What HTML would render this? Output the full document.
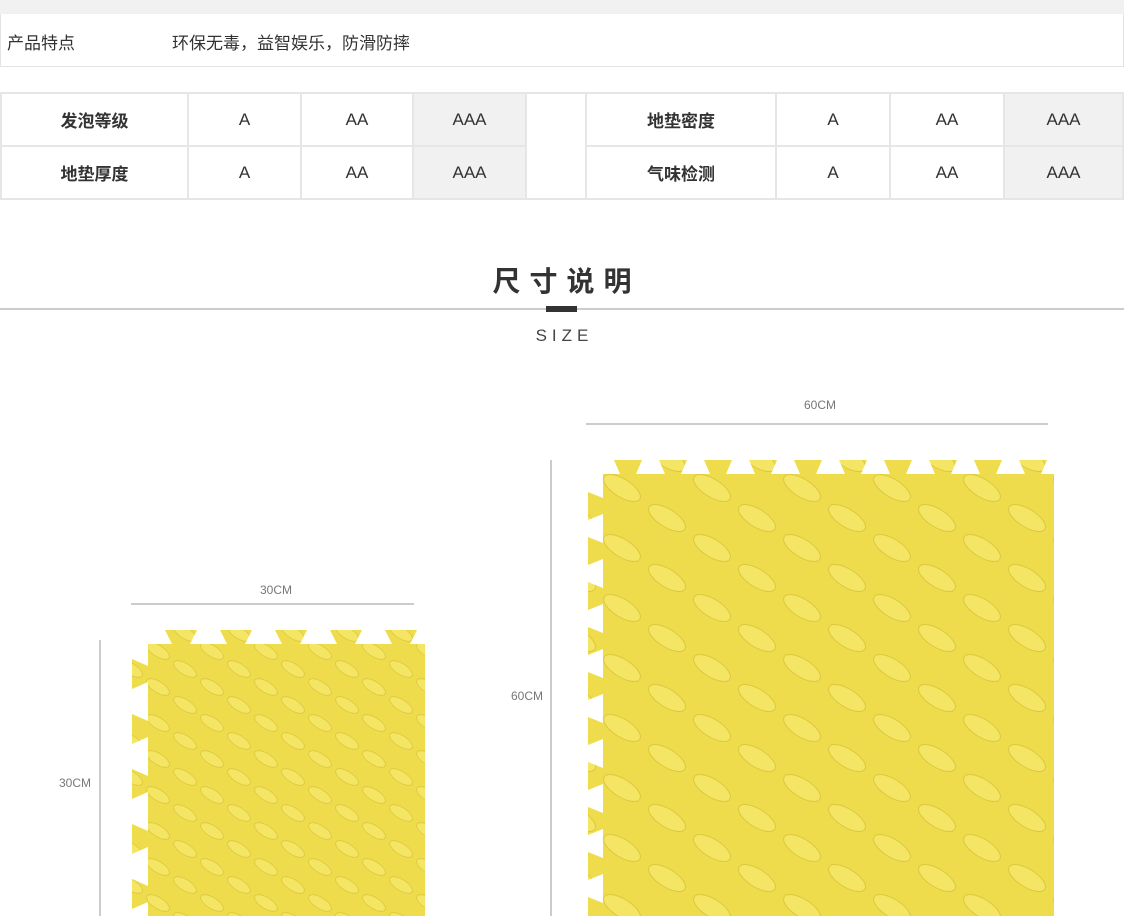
<!DOCTYPE html>
<html><head><meta charset="utf-8"><style>
*{margin:0;padding:0;box-sizing:border-box}
body{width:1124px;height:916px;overflow:hidden;background:#fff;font-family:"Liberation Sans","Noto Sans CJK SC",sans-serif;color:#333;position:relative}
.abs{position:absolute}
table{border-collapse:collapse;position:absolute;left:0;top:92px;width:1124px}
td{border:2px solid #e6e6e6;height:53px;text-align:center;font-size:17px;color:#333}
td.b{font-weight:bold}
td.g{background:#f1f1f1}
</style></head><body>
<div class="abs" style="left:0;top:0;width:1124px;height:14px;background:#f1f1f1"></div>
<div class="abs" style="left:0;top:14px;width:1124px;height:53px;border:1px solid #e3e3e3;border-top:none"></div>
<div class="abs" style="left:7px;top:29px;font-size:17px">产品特点</div>
<div class="abs" style="left:172px;top:29px;font-size:17px">环保无毒，益智娱乐，防滑防摔</div>
<table>
<tr><td class="b" style="width:187px">发泡等级</td><td style="width:113px">A</td><td style="width:112px">AA</td><td class="g" style="width:113px">AAA</td><td rowspan="2" style="width:60px"></td><td class="b" style="width:190px">地垫密度</td><td style="width:114px">A</td><td style="width:114px">AA</td><td class="g">AAA</td></tr>
<tr><td class="b">地垫厚度</td><td>A</td><td>AA</td><td class="g">AAA</td><td class="b">气味检测</td><td>A</td><td>AA</td><td class="g">AAA</td></tr>
</table>
<div class="abs" style="left:0;top:260px;width:1124px;text-align:center;font-size:28px;font-weight:bold;letter-spacing:9px;color:#333;padding-left:9px">尺寸说明</div>
<div class="abs" style="left:0;top:308px;width:1124px;height:2px;background:#ccc"></div>
<div class="abs" style="left:546px;top:306px;width:31px;height:6px;background:#333"></div>
<div class="abs" style="left:0;top:326px;width:1124px;text-align:center;font-size:17px;letter-spacing:5px;color:#444;padding-left:5px">SIZE</div>
<svg class="abs" style="left:0;top:0" width="1124" height="916">
<defs>
<pattern id="p1" width="90" height="60" patternUnits="userSpaceOnUse" x="600" y="470">
<rect width="90" height="60" fill="#eedc4c"/>
<ellipse cx="22" cy="18" rx="21" ry="9" transform="rotate(32 22 18)" fill="#f4e565" stroke="#dcc93c" stroke-width="1"/>
<ellipse cx="67" cy="48" rx="21" ry="9" transform="rotate(32 67 48)" fill="#f4e565" stroke="#dcc93c" stroke-width="1"/>
<ellipse cx="67" cy="-12" rx="21" ry="9" transform="rotate(32 67 -12)" fill="#f4e565" stroke="#dcc93c" stroke-width="1"/>
</pattern>
<pattern id="p2" width="54" height="36" patternUnits="userSpaceOnUse" x="145" y="640">
<rect width="54" height="36" fill="#eedc4c"/>
<ellipse cx="13" cy="11" rx="13" ry="5.5" transform="rotate(32 13 11)" fill="#f4e565" stroke="#dcc93c" stroke-width="0.8"/>
<ellipse cx="40" cy="29" rx="13" ry="5.5" transform="rotate(32 40 29)" fill="#f4e565" stroke="#dcc93c" stroke-width="0.8"/>
<ellipse cx="40" cy="-7" rx="13" ry="5.5" transform="rotate(32 40 -7)" fill="#f4e565" stroke="#dcc93c" stroke-width="0.8"/>
</pattern>
</defs>
<g stroke="#999" stroke-width="1" fill="none">
<line x1="586" y1="424" x2="1048" y2="424"/><line x1="551" y1="460" x2="551" y2="916"/>
<line x1="131" y1="604" x2="414" y2="604"/><line x1="100" y1="640" x2="100" y2="916"/>
</g>
<g font-size="12" fill="#777" font-family="Liberation Sans">
<text x="820" y="409" text-anchor="middle">60CM</text>
<text x="527" y="700" text-anchor="middle">60CM</text>
<text x="276" y="594" text-anchor="middle">30CM</text>
<text x="75" y="787" text-anchor="middle">30CM</text>
</g>
<g fill="url(#p1)">
<rect x="603" y="474" width="437" height="442"/>
<rect x="1038" y="474" width="16" height="442"/>
<path d="M620 474 L614 460 L642 460 L636 474Z"/><path d="M665 474 L659 460 L687 460 L681 474Z"/><path d="M710 474 L704 460 L732 460 L726 474Z"/><path d="M755 474 L749 460 L777 460 L771 474Z"/><path d="M800 474 L794 460 L822 460 L816 474Z"/><path d="M845 474 L839 460 L867 460 L861 474Z"/><path d="M890 474 L884 460 L912 460 L906 474Z"/><path d="M935 474 L929 460 L957 460 L951 474Z"/><path d="M980 474 L974 460 L1002 460 L996 474Z"/><path d="M1025 474 L1019 460 L1047 460 L1041 474Z"/>
<path d="M603 498 L588 492 L588 520 L603 514Z"/><path d="M603 543 L588 537 L588 565 L603 559Z"/><path d="M603 588 L588 582 L588 610 L603 604Z"/><path d="M603 633 L588 627 L588 655 L603 649Z"/><path d="M603 678 L588 672 L588 700 L603 694Z"/><path d="M603 723 L588 717 L588 745 L603 739Z"/><path d="M603 768 L588 762 L588 790 L603 784Z"/><path d="M603 813 L588 807 L588 835 L603 829Z"/><path d="M603 858 L588 852 L588 880 L603 874Z"/><path d="M603 903 L588 897 L588 916 L603 916Z"/>
</g>
<g fill="url(#p2)">
<rect x="148" y="644" width="262" height="272"/>
<rect x="408" y="644" width="17" height="272"/>
<path d="M172 644 L165 630 L197 630 L190 644Z"/><path d="M227 644 L220 630 L252 630 L245 644Z"/><path d="M282 644 L275 630 L307 630 L300 644Z"/><path d="M337 644 L330 630 L362 630 L355 644Z"/><path d="M392 644 L385 630 L417 630 L410 644Z"/>
<path d="M148 666 L132 659 L132 689 L148 682Z"/><path d="M148 721 L132 714 L132 744 L148 737Z"/><path d="M148 776 L132 769 L132 799 L148 792Z"/><path d="M148 831 L132 824 L132 854 L148 847Z"/><path d="M148 886 L132 879 L132 909 L148 902Z"/>
</g>
</svg>
</body></html>
